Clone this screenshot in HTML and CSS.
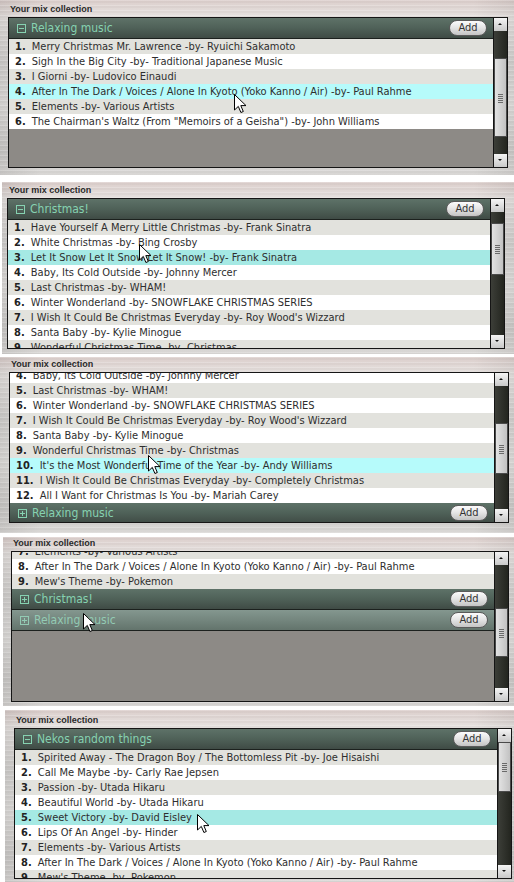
FILE: index.html
```html
<!DOCTYPE html>
<html lang="en">
<head>
    <meta charset="UTF-8">
    <title>Your mix collection</title>
    <link rel="stylesheet" href="styles.css">
</head>
<body>
    <!-- 1: Relaxing music open, hover on row 4 -->
    <div class="shot shot-1">
        <div class="caption">Your mix collection</div>
        <div class="box box-wide">
            <div class="viewport">
                <div class="content">
                    <div class="mix-head">
                        <span class="toggle"></span>
                        <span class="mix-name">Relaxing music</span>
                        <button class="add">Add</button>
                    </div>
                    <ol class="tracks">
                        <li><b>1.</b> Merry Christmas Mr. Lawrence -by- Ryuichi Sakamoto</li>
                        <li><b>2.</b> Sigh In the Big City -by- Traditional Japanese Music</li>
                        <li><b>3.</b> I Giorni -by- Ludovico Einaudi</li>
                        <li class="hover"><b>4.</b> After In The Dark / Voices / Alone In Kyoto (Yoko Kanno / Air) -by- Paul Rahme</li>
                        <li><b>5.</b> Elements -by- Various Artists</li>
                        <li><b>6.</b> The Chairman's Waltz (From "Memoirs of a Geisha") -by- John Williams</li>
                    </ol>
                </div>
            </div>
            <div class="scrollbar">
                <div class="arrow up"></div>
                <div class="track"><div class="thumb" style="margin-top:27px;height:79px"></div></div>
                <div class="arrow down"></div>
            </div>
        </div>
        <svg class="cursor" style="left:234px;top:94px" width="13" height="20" viewBox="0 0 13 20"><path d="M0.5 0.5V16L4.3 12.4L6.9 18.5L9.3 17.5L6.8 11.6H12Z" fill="#fff" stroke="#000"/></svg>
    </div>

    <!-- 2: Christmas! open, row 3 active -->
    <div class="shot shot-2">
        <div class="caption">Your mix collection</div>
        <div class="box">
            <div class="viewport">
                <div class="content">
                    <div class="mix-head">
                        <span class="toggle"></span>
                        <span class="mix-name">Christmas!</span>
                        <button class="add">Add</button>
                    </div>
                    <ol class="tracks">
                        <li><b>1.</b> Have Yourself A Merry Little Christmas -by- Frank Sinatra</li>
                        <li><b>2.</b> White Christmas -by- Bing Crosby</li>
                        <li class="active"><b>3.</b> Let It Snow Let It Snow Let It Snow! -by- Frank Sinatra</li>
                        <li><b>4.</b> Baby, Its Cold Outside -by- Johnny Mercer</li>
                        <li><b>5.</b> Last Christmas -by- WHAM!</li>
                        <li><b>6.</b> Winter Wonderland -by- SNOWFLAKE CHRISTMAS SERIES</li>
                        <li><b>7.</b> I Wish It Could Be Christmas Everyday -by- Roy Wood's Wizzard</li>
                        <li><b>8.</b> Santa Baby -by- Kylie Minogue</li>
                        <li><b>9.</b> Wonderful Christmas Time -by- Christmas</li>
                    </ol>
                </div>
            </div>
            <div class="scrollbar">
                <div class="arrow up"></div>
                <div class="track"><div class="thumb" style="margin-top:11px;height:52px"></div></div>
                <div class="arrow down"></div>
            </div>
        </div>
        <svg class="cursor" style="left:137px;top:62px" width="13" height="20" viewBox="0 0 13 20"><path d="M0.5 0.5V16L4.3 12.4L6.9 18.5L9.3 17.5L6.8 11.6H12Z" fill="#fff" stroke="#000"/></svg>
    </div>

    <!-- 3: Christmas! scrolled down, Relaxing music folded -->
    <div class="shot shot-3">
        <div class="caption">Your mix collection</div>
        <div class="box box-wide">
            <div class="viewport">
                <div class="content" style="margin-top:-71px">
                    <div class="mix-head">
                        <span class="toggle"></span>
                        <span class="mix-name">Christmas!</span>
                        <button class="add">Add</button>
                    </div>
                    <ol class="tracks">
                        <li><b>1.</b> Have Yourself A Merry Little Christmas -by- Frank Sinatra</li>
                        <li><b>2.</b> White Christmas -by- Bing Crosby</li>
                        <li><b>3.</b> Let It Snow Let It Snow Let It Snow! -by- Frank Sinatra</li>
                        <li><b>4.</b> Baby, Its Cold Outside -by- Johnny Mercer</li>
                        <li><b>5.</b> Last Christmas -by- WHAM!</li>
                        <li><b>6.</b> Winter Wonderland -by- SNOWFLAKE CHRISTMAS SERIES</li>
                        <li><b>7.</b> I Wish It Could Be Christmas Everyday -by- Roy Wood's Wizzard</li>
                        <li><b>8.</b> Santa Baby -by- Kylie Minogue</li>
                        <li><b>9.</b> Wonderful Christmas Time -by- Christmas</li>
                        <li class="hover"><b>10.</b> It's the Most Wonderful Time of the Year -by- Andy Williams</li>
                        <li><b>11.</b> I Wish It Could Be Christmas Everyday -by- Completely Christmas</li>
                        <li><b>12.</b> All I Want for Christmas Is You -by- Mariah Carey</li>
                    </ol>
                    <div class="mix-head">
                        <span class="toggle closed"></span>
                        <span class="mix-name">Relaxing music</span>
                        <button class="add">Add</button>
                    </div>
                </div>
            </div>
            <div class="scrollbar">
                <div class="arrow up"></div>
                <div class="track"><div class="thumb" style="margin-top:37px;height:51px"></div></div>
                <div class="arrow down"></div>
            </div>
        </div>
        <svg class="cursor" style="left:148px;top:98px" width="13" height="20" viewBox="0 0 13 20"><path d="M0.5 0.5V16L4.3 12.4L6.9 18.5L9.3 17.5L6.8 11.6H12Z" fill="#fff" stroke="#000"/></svg>
    </div>

    <!-- 4: end of Nekos list, two folded mixes, hover on the last -->
    <div class="shot shot-4">
        <div class="caption">Your mix collection</div>
        <div class="box">
            <div class="viewport">
                <div class="content" style="margin-top:-119px">
                    <div class="mix-head">
                        <span class="toggle"></span>
                        <span class="mix-name">Nekos random things</span>
                        <button class="add">Add</button>
                    </div>
                    <ol class="tracks">
                        <li><b>1.</b> Spirited Away - The Dragon Boy / The Bottomless Pit -by- Joe Hisaishi</li>
                        <li><b>2.</b> Call Me Maybe -by- Carly Rae Jepsen</li>
                        <li><b>3.</b> Passion -by- Utada Hikaru</li>
                        <li><b>4.</b> Beautiful World -by- Utada Hikaru</li>
                        <li><b>5.</b> Sweet Victory -by- David Eisley</li>
                        <li><b>6.</b> Lips Of An Angel -by- Hinder</li>
                        <li><b>7.</b> Elements -by- Various Artists</li>
                        <li><b>8.</b> After In The Dark / Voices / Alone In Kyoto (Yoko Kanno / Air) -by- Paul Rahme</li>
                        <li><b>9.</b> Mew's Theme -by- Pokemon</li>
                    </ol>
                    <div class="mix-head">
                        <span class="toggle closed"></span>
                        <span class="mix-name">Christmas!</span>
                        <button class="add">Add</button>
                    </div>
                    <div class="mix-head hover">
                        <span class="toggle closed"></span>
                        <span class="mix-name">Relaxing music</span>
                        <button class="add">Add</button>
                    </div>
                </div>
            </div>
            <div class="scrollbar">
                <div class="arrow up"></div>
                <div class="track"><div class="thumb" style="margin-top:43px;height:49px"></div></div>
                <div class="arrow down"></div>
            </div>
        </div>
        <svg class="cursor" style="left:80px;top:76px" width="13" height="20" viewBox="0 0 13 20"><path d="M0.5 0.5V16L4.3 12.4L6.9 18.5L9.3 17.5L6.8 11.6H12Z" fill="#fff" stroke="#000"/></svg>
    </div>

    <!-- 5: Nekos random things open, row 5 active -->
    <div class="shot shot-5">
        <div class="caption">Your mix collection</div>
        <div class="box">
            <div class="viewport">
                <div class="content">
                    <div class="mix-head">
                        <span class="toggle"></span>
                        <span class="mix-name">Nekos random things</span>
                        <button class="add">Add</button>
                    </div>
                    <ol class="tracks">
                        <li><b>1.</b> Spirited Away - The Dragon Boy / The Bottomless Pit -by- Joe Hisaishi</li>
                        <li><b>2.</b> Call Me Maybe -by- Carly Rae Jepsen</li>
                        <li><b>3.</b> Passion -by- Utada Hikaru</li>
                        <li><b>4.</b> Beautiful World -by- Utada Hikaru</li>
                        <li class="active"><b>5.</b> Sweet Victory -by- David Eisley</li>
                        <li><b>6.</b> Lips Of An Angel -by- Hinder</li>
                        <li><b>7.</b> Elements -by- Various Artists</li>
                        <li><b>8.</b> After In The Dark / Voices / Alone In Kyoto (Yoko Kanno / Air) -by- Paul Rahme</li>
                        <li><b>9.</b> Mew's Theme -by- Pokemon</li>
                    </ol>
                </div>
            </div>
            <div class="scrollbar">
                <div class="arrow up"></div>
                <div class="track"><div class="thumb" style="margin-top:0;height:50px"></div></div>
                <div class="arrow down"></div>
            </div>
        </div>
        <svg class="cursor" style="left:192px;top:104px" width="13" height="20" viewBox="0 0 13 20"><path d="M0.5 0.5V16L4.3 12.4L6.9 18.5L9.3 17.5L6.8 11.6H12Z" fill="#fff" stroke="#000"/></svg>
    </div>
</body>
</html>
```

FILE: styles.css
```css
html, body {
    margin: 0;
    padding: 0;
    background-color: #fff;
    overflow: hidden;
}

body {
    font-family: "DejaVu Sans Condensed", "Liberation Sans", sans-serif;
    font-size: 11px;
    color: #333;
}

/* one screenshot of the widget */
.shot {
    position: relative;
    box-sizing: border-box;
    background:
        repeating-linear-gradient(180deg, rgba(255, 255, 255, 0.18) 0 1px, rgba(0, 0, 0, 0.025) 1px 3px, transparent 3px 5px),
        linear-gradient(90deg, rgba(0, 0, 0, 0.08), rgba(0, 0, 0, 0) 8%, rgba(0, 0, 0, 0) 92%, rgba(0, 0, 0, 0.06)),
        linear-gradient(180deg, #dccfcc 0%, #e6e2e0 10%, #d5d3d1 35%, #e1dfdd 60%, #cfcdcb 85%, #d9d7d5 100%);
}

.shot-1 { padding: 3px 0 7px 8px; }
.shot-2 { margin: 7px 0 0 2px; padding: 2px 0 5px 5px; }
.shot-3 { margin-top: 3px; padding: 1px 0 10px 9px; }
.shot-4 { margin: 4px 0 0 3px; padding: 0 0 4px 8px; }
.shot-5 { margin: 4px 0 0 5px; padding: 4px 0 0 9px; height: 172px; }

.caption {
    font-family: "Liberation Sans", sans-serif;
    font-size: 9px;
    font-weight: bold;
    line-height: 12px;
    height: 12px;
    margin: 0 0 2px 2px;
    color: #2a2a2a;
}

.box {
    display: flex;
    width: 498px;
    height: 151px;
    box-sizing: border-box;
    border: 1px solid #151515;
}

.box-wide { width: 500px; }

.viewport {
    flex: 1;
    overflow: hidden;
    background-color: #8d8a86;
}

/* mix header */
.mix-head {
    display: flex;
    align-items: center;
    height: 21px;
    box-sizing: border-box;
    padding: 0 6px 0 8px;
    border-bottom: 1px solid #1c211e;
    background: linear-gradient(180deg, #5e7268 0%, #4f6158 50%, #3f4b45 100%);
    color: #86d2b1;
}

.mix-head.hover {
    background: linear-gradient(180deg, #84978f 0%, #74867e 50%, #63746c 100%);
    color: #93cbb4;
}

.toggle {
    position: relative;
    width: 9px;
    height: 9px;
    box-sizing: border-box;
    border: 1px solid currentColor;
    margin-right: 5px;
}

.toggle::before {
    content: "";
    position: absolute;
    left: 1px;
    right: 1px;
    top: 3px;
    height: 1px;
    background-color: currentColor;
}

.toggle.closed::after {
    content: "";
    position: absolute;
    top: 1px;
    bottom: 1px;
    left: 3px;
    width: 1px;
    background-color: currentColor;
}

.mix-name {
    flex: 1;
    font-size: 12px;
}

.add {
    font-family: inherit;
    font-size: 11px;
    color: #333;
    width: 38px;
    height: 16px;
    padding: 0;
    line-height: 14px;
    border: 1px solid #5a5a5a;
    border-radius: 8px;
    background: linear-gradient(180deg, #fbfbfb 0%, #e6e6e6 45%, #c4c4c4 100%);
}

/* track list */
.tracks {
    list-style: none;
    margin: 0;
    padding: 0;
}

.tracks li {
    height: 15px;
    line-height: 15px;
    padding-left: 6px;
    white-space: nowrap;
    color: #2e2e2e;
    background-color: #fff;
}

.tracks li:nth-child(odd) {
    background-color: #e2e2dd;
}

.tracks li.hover {
    background-color: #b6fbfb;
}

.tracks li.active {
    background-color: #a5e9e4;
}

.tracks b {
    color: #222;
    margin-right: 3px;
}

/* scrollbar */
.scrollbar {
    display: flex;
    flex-direction: column;
    width: 13px;
    border-left: 1px solid #151515;
    background: linear-gradient(90deg, #3c3e38, #23251f);
}

.arrow {
    position: relative;
    height: 13px;
    background: linear-gradient(180deg, #f4f4f4, #c9c9c9);
}

.arrow::after {
    content: "";
    position: absolute;
    left: 4px;
    top: 5px;
    border-left: 2px solid transparent;
    border-right: 2px solid transparent;
}

.arrow.up::after { border-bottom: 2px solid #111; }
.arrow.down::after { border-top: 2px solid #111; }

.track {
    flex: 1;
}

.thumb {
    position: relative;
    box-sizing: border-box;
    border: 1px solid #4a4a4a;
    background: linear-gradient(90deg, #e2e2e2, #c2c2c2);
}

.thumb::after {
    content: "";
    position: absolute;
    left: 3px;
    right: 3px;
    top: 50%;
    height: 9px;
    margin-top: -4px;
    background: repeating-linear-gradient(180deg, #6a6a6a 0 1px, transparent 1px 2px);
}

.cursor {
    position: absolute;
}
```
